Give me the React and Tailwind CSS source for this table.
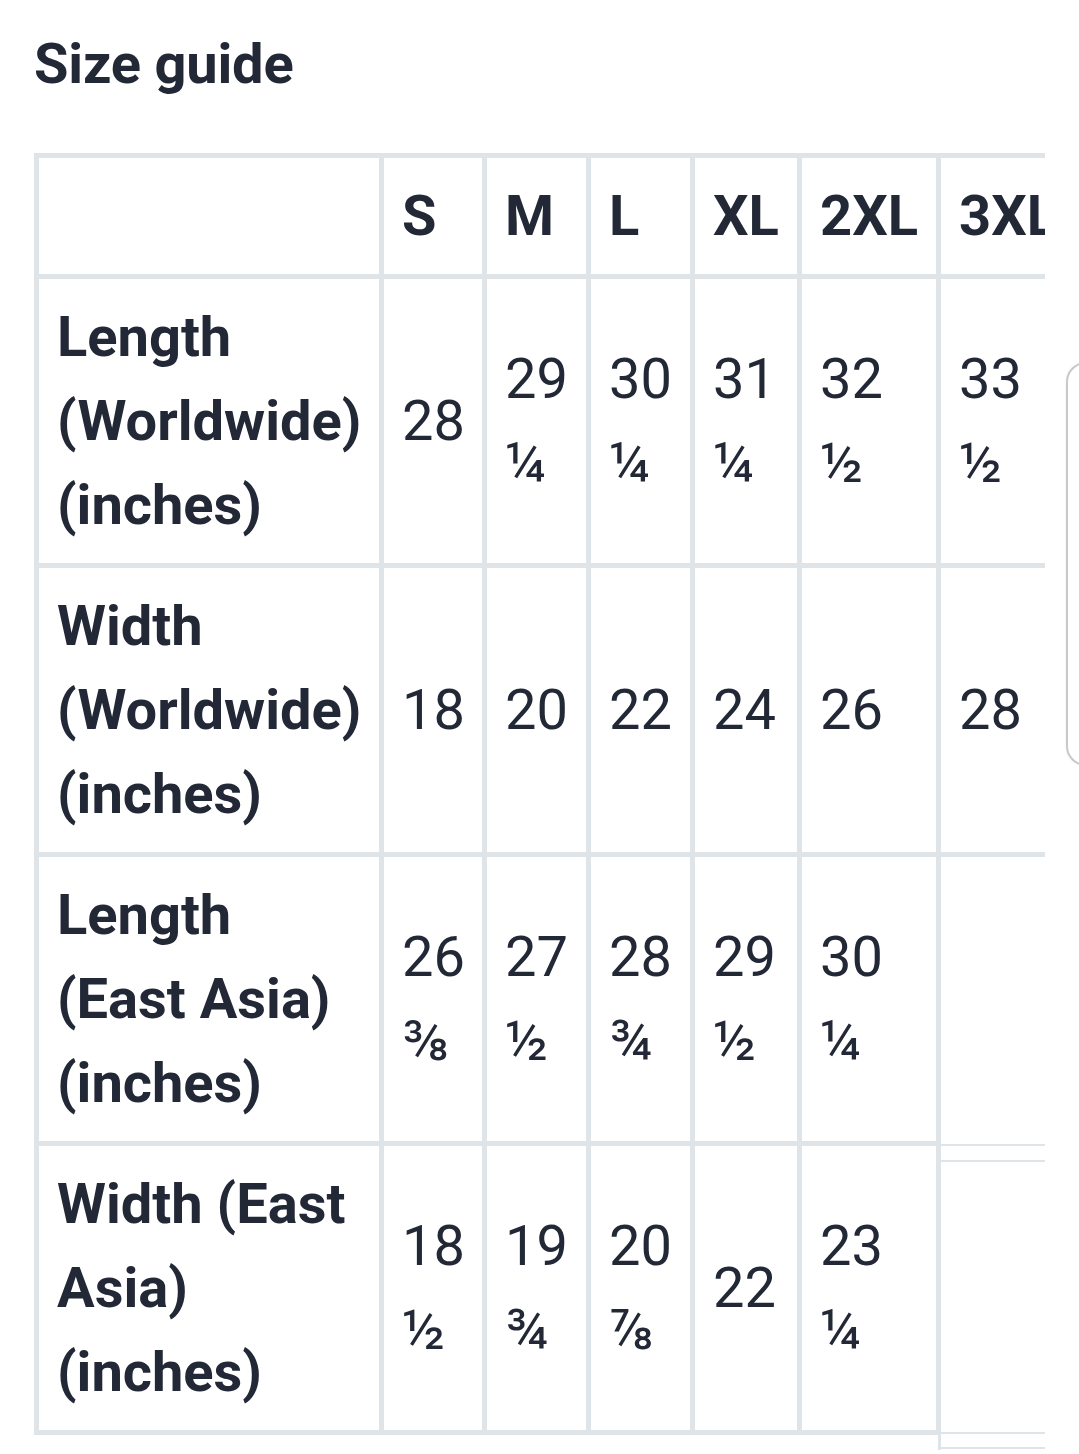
import React from "react";

const SIZES = ["S", "M", "L", "XL", "2XL", "3XL"];

// each value is split into the lines it shows in the narrow column
const ROWS = [
  {
    label: ["Length", "(Worldwide)", "(inches)"],
    values: [["28"], ["29", "¼"], ["30", "¼"], ["31", "¼"], ["32", "½"], ["33", "½"]],
  },
  {
    label: ["Width", "(Worldwide)", "(inches)"],
    values: [["18"], ["20"], ["22"], ["24"], ["26"], ["28"]],
  },
  {
    label: ["Length", "(East Asia)", "(inches)"],
    values: [["26", "⅜"], ["27", "½"], ["28", "¾"], ["29", "½"], ["30", "¼"], []],
  },
  {
    label: ["Width (East", "Asia)", "(inches)"],
    values: [["18", "½"], ["19", "¾"], ["20", "⅞"], ["22"], ["23", "¼"], null],
  },
];

function Cell({ lines, bold }) {
  return (
    <div
      className={`flex flex-col justify-center bg-white pr-[16px] pl-[18px] py-[16px] whitespace-nowrap ${
        bold ? "font-bold" : "font-normal"
      }`}
    >
      {lines.map((line, i) => (
        <span key={i} className="block">
          {line}
        </span>
      ))}
    </div>
  );
}

// the last cell of the table renders with doubled thin rules in the original
function BrokenCell() {
  return (
    <div className="-mt-[5px] -mb-[20px] -ml-[3px] flex flex-col border-l-[3px] border-[#dfe4e8] bg-white pt-[3px] pb-[1px]">
      <div className="h-[2px] bg-[#dfe4e8]" />
      <div className="h-[14px]" />
      <div className="h-[2px] bg-[#dfe4e8]" />
      <div className="flex-1" />
      <div className="h-[2px] bg-[#dfe4e8]" />
      <div className="h-[13px]" />
      <div className="h-[2px] bg-[#dfe4e8]" />
    </div>
  );
}

export default function App() {
  return (
    <div
      className="relative min-h-[1454px] w-[1079px] overflow-hidden bg-white px-[34px] pt-[22px] text-[56px] leading-[84px] text-[#222836]"
      style={{ fontFamily: "Roboto, 'Liberation Sans', sans-serif" }}
    >
      <h2 className="font-bold tracking-[-0.2px]">Size guide</h2>

      <div className="mt-[47px] w-[1011px] overflow-hidden pb-[20px]">
        <div className="grid w-max grid-cols-[340px_98px_99px_99px_102px_134px_200px] gap-[5px] bg-[#dfe4e8] p-[5px]">
          <Cell lines={[""]} bold />
          {SIZES.map((s) => (
            <Cell key={s} lines={[s]} bold />
          ))}

          {ROWS.map((row) => (
            <React.Fragment key={row.label.join(" ")}>
              <Cell lines={row.label} bold />
              {row.values.map((v, i) =>
                v === null ? <BrokenCell key={i} /> : <Cell key={i} lines={v} />
              )}
            </React.Fragment>
          ))}
        </div>
      </div>

      {/* edge panel handle */}
      <div className="absolute top-[362px] left-[1066px] h-[404px] w-[40px] rounded-[22px] border-2 border-[#c9c9c9] bg-white shadow-[0_0_2px_rgba(0,0,0,0.08)]" />
    </div>
  );
}
